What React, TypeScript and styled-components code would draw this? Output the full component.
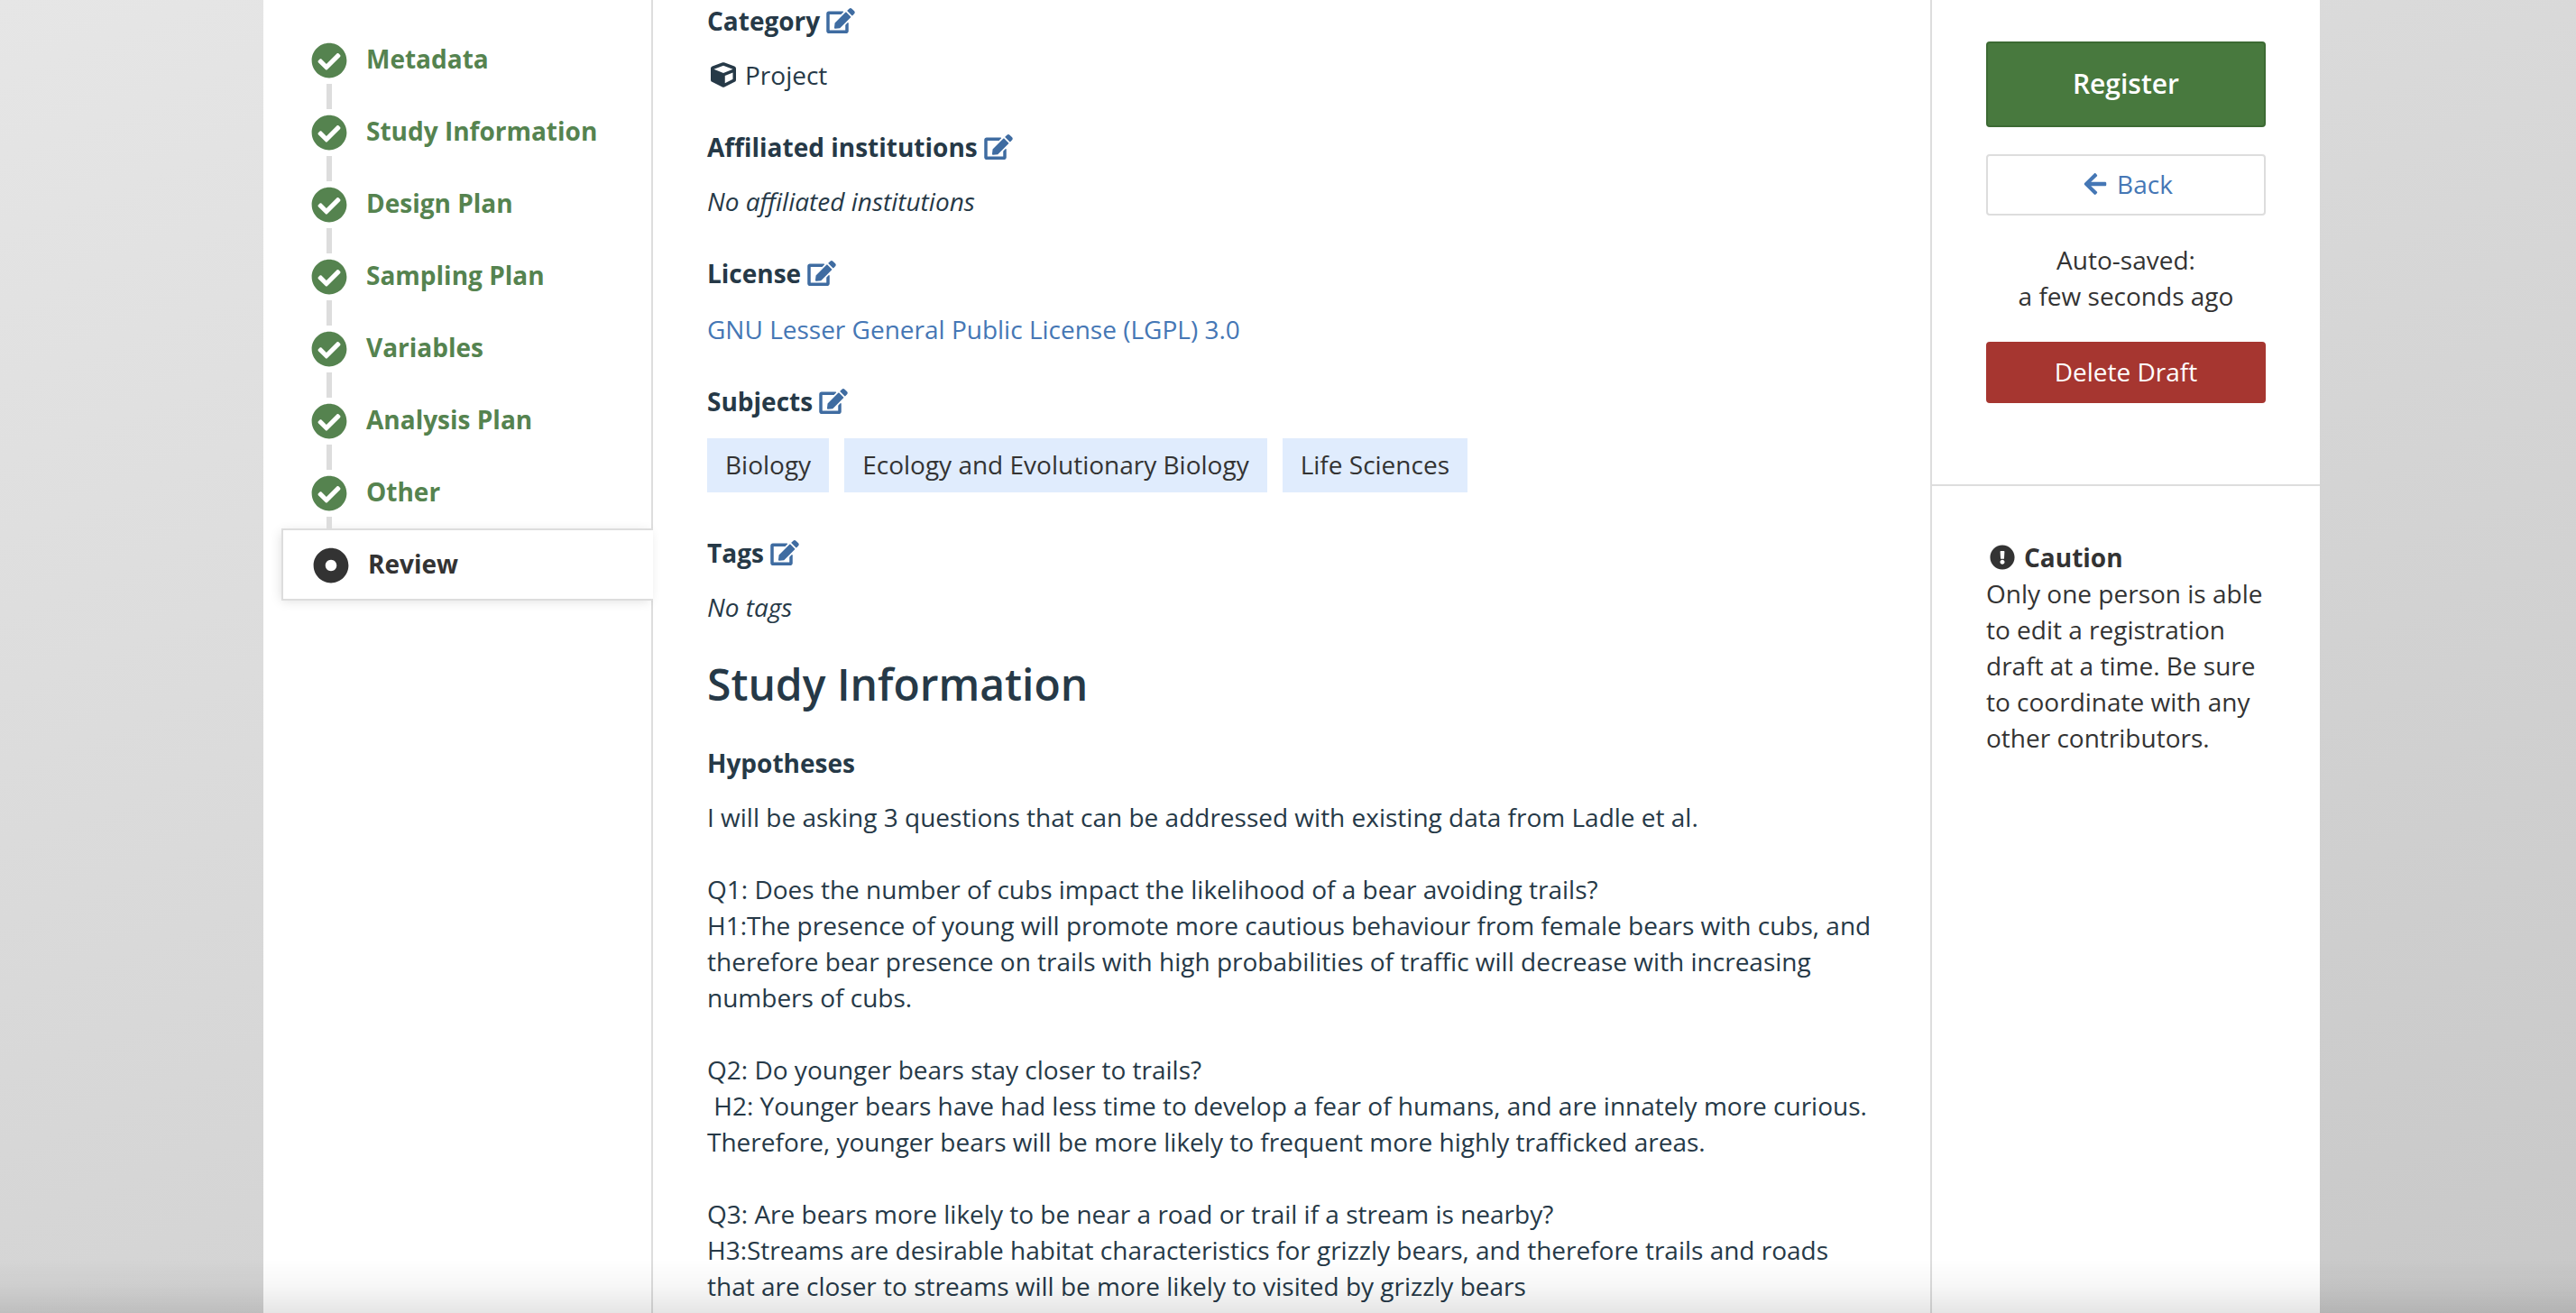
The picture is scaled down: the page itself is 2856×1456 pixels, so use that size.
import React from 'react';
import styled, { createGlobalStyle } from 'styled-components';
import { FaCheckCircle, FaDotCircle, FaCube, FaEdit, FaExclamationCircle, FaArrowLeft } from 'react-icons/fa';

const GlobalStyle = createGlobalStyle`
  *, *::before, *::after { box-sizing: border-box; }
  body {
    margin: 0;
    font-family: 'Open Sans', 'Noto Sans', sans-serif;
    font-size: 28px;
    line-height: 40px;
    color: #333333;
    background: #d8d8d8;
  }
`;

const Backdrop = styled.div`
  display: flex;
  min-height: 100vh;
  padding: 0 284px 0 292px;
  background: linear-gradient(159deg, #e6e6e6, #c8c8c8);
`;

const Page = styled.div`
  flex: 1;
  display: grid;
  grid-template-columns: 432px minmax(0, 1fr) 432px;
  background: #ffffff;
`;

const Sidebar = styled.nav`
  padding: 26px 0 0 20px;
  border-right: 2px solid #dddddd;
`;

const StepList = styled.ol`
  margin: 0 -2px 0 0;
  padding: 0;
  list-style: none;
`;

const Step = styled.li<{ $current: boolean }>`
  display: flex;
  height: 80px;
  border: ${p => (p.$current ? '2px solid #dddddd' : '0 solid transparent')};
  border-right: 0;
  padding-left: 33px;
  background: ${p => (p.$current ? '#ffffff' : 'none')};
  box-shadow: ${p => (p.$current ? '-2px 2px 12px -2px rgba(0, 0, 0, 0.14)' : 'none')};
`;

const Track = styled.span`
  display: flex;
  flex-direction: column;
  align-items: center;
  gap: 6px;
  width: 40px;
`;

const SegmentAbove = styled.span<{ $current: boolean; $shown: boolean }>`
  width: 6px;
  height: ${p => (p.$current ? '13px' : '15px')};
  background: ${p => (p.$shown ? '#dddddd' : 'transparent')};
`;

const SegmentBelow = styled.span<{ $shown: boolean }>`
  flex: 1;
  width: 6px;
  background: ${p => (p.$shown ? '#dddddd' : 'transparent')};
`;

const StepLink = styled.a<{ $current: boolean }>`
  display: flex;
  gap: 21px;
  color: ${p => (p.$current ? '#333333' : '#55834f')};
  font-weight: 700;
  text-decoration: none;
`;

const StepName = styled.span`
  align-self: center;
  padding-bottom: 2px;
`;

const Main = styled.main`
  padding: 3px 60px 0;
  color: #263947;
`;

const Field = styled.section`
  margin-bottom: 40px;
`;

const FieldTitle = styled.h3`
  display: flex;
  align-items: center;
  gap: 7px;
  margin: 0 0 20px;
  font-size: 28px;
  line-height: 40px;
  font-weight: 700;
`;

const EditButton = styled.button`
  display: flex;
  padding: 0;
  border: 0;
  background: none;
  color: #3f6ca1;
  svg { width: 32px; height: 28px; }
`;

const FixedIcon = styled.span`
  display: flex;
  justify-content: center;
  width: 35px;
  svg { width: 28px; height: 28px; }
`;

const Value = styled.p`
  display: flex;
  align-items: center;
  gap: 7px;
  margin: 0;
`;

const EmptyValue = styled.p`
  margin: 0;
  font-style: italic;
`;

const LicenseLink = styled.a`
  display: block;
  padding-top: 2px;
  color: #4577b5;
  text-decoration: none;
`;

const Chips = styled.ul`
  display: flex;
  gap: 17px;
  margin: 0;
  padding: 1px 0 7px;
  list-style: none;
`;

const Chip = styled.li`
  padding: 9px 20px 11px;
  color: #333333;
  background: #e0ecfd;
`;

const SectionTitle = styled.h2`
  margin: 0 0 41px;
  font-size: 48px;
  line-height: 52px;
  font-weight: 600;
`;

const Answer = styled.p`
  margin: 0;
  white-space: pre-wrap;
`;

const Aside = styled.aside`
  border-left: 2px solid #dddddd;
`;

const Actions = styled.div`
  display: flex;
  flex-direction: column;
  padding: 46px 60px 90px;
  border-bottom: 2px solid #dddddd;
`;

const Button = styled.button`
  display: flex;
  align-items: center;
  justify-content: center;
  height: 68px;
  padding: 0 0 2px;
  border: 2px solid;
  border-radius: 4px;
  font-family: inherit;
  font-size: 28px;
  line-height: 40px;
`;

const RegisterButton = styled(Button)`
  height: 95px;
  margin-bottom: 30px;
  border-color: #3c6a33;
  background: #48793e;
  color: #ffffff;
  font-size: 30px;
  font-weight: 600;
`;

const BackButton = styled(Button)`
  gap: 7px;
  border-color: #dddddd;
  background: #ffffff;
  color: #4577b5;
`;

const DeleteButton = styled(Button)`
  border-color: #a63630;
  background: #a63630;
  color: #ffffff;
`;

const SaveStatus = styled.p`
  margin: 29px 0 31px;
  text-align: center;
`;

const CautionBox = styled.div`
  padding: 59px 60px 0;
`;

const CautionTitle = styled.h3`
  display: flex;
  align-items: center;
  gap: 7px;
  margin: 0;
  font-size: 28px;
  line-height: 40px;
  font-weight: 700;
`;

const CautionText = styled.p`
  margin: 0;
`;

const BottomShade = styled.div`
  position: fixed;
  inset: auto 0 0 0;
  height: 60px;
  pointer-events: none;
  background: linear-gradient(to bottom, rgba(0, 0, 0, 0), rgba(0, 0, 0, 0.03) 50%, rgba(0, 0, 0, 0.1));
`;

const EditableTitle = ({ children }: { children: string }) => (
  <FieldTitle>
    {children}
    <EditButton type="button" aria-label={`Edit ${children}`}>
      <FaEdit aria-hidden />
    </EditButton>
  </FieldTitle>
);

const STEPS = [
  'Metadata',
  'Study Information',
  'Design Plan',
  'Sampling Plan',
  'Variables',
  'Analysis Plan',
  'Other',
  'Review',
];

const SUBJECTS = ['Biology', 'Ecology and Evolutionary Biology', 'Life Sciences'];

const HYPOTHESES = `I will be asking 3 questions that can be addressed with existing data from Ladle et al.

Q1: Does the number of cubs impact the likelihood of a bear avoiding trails?
H1:The presence of young will promote more cautious behaviour from female bears with cubs, and therefore bear presence on trails with high probabilities of traffic will decrease with increasing numbers of cubs.

Q2: Do younger bears stay closer to trails?
 H2: Younger bears have had less time to develop a fear of humans, and are innately more curious. Therefore, younger bears will be more likely to frequent more highly trafficked areas.

Q3: Are bears more likely to be near a road or trail if a stream is nearby?
H3:Streams are desirable habitat characteristics for grizzly bears, and therefore trails and roads that are closer to streams will be more likely to visited by grizzly bears`;

export default function App() {
  return (
    <>
      <GlobalStyle />
      <Backdrop>
        <Page>
          <Sidebar aria-label="Registration steps">
            <StepList>
              {STEPS.map((name, i) => {
                const current = name === 'Review';
                return (
                  <Step key={name} $current={current}>
                    <StepLink href="#" $current={current} aria-current={current ? 'step' : undefined}>
                      <Track>
                        <SegmentAbove $current={current} $shown={i > 0 && !current} />
                        {current ? <FaDotCircle size={40} aria-hidden /> : <FaCheckCircle size={40} aria-hidden />}
                        <SegmentBelow $shown={!current} />
                      </Track>
                      <StepName>{name}</StepName>
                    </StepLink>
                  </Step>
                );
              })}
            </StepList>
          </Sidebar>

          <Main>
            <Field>
              <EditableTitle>Category</EditableTitle>
              <Value>
                <FixedIcon>
                  <FaCube aria-hidden />
                </FixedIcon>
                Project
              </Value>
            </Field>
            <Field>
              <EditableTitle>Affiliated institutions</EditableTitle>
              <EmptyValue>No affiliated institutions</EmptyValue>
            </Field>
            <Field>
              <EditableTitle>License</EditableTitle>
              <LicenseLink href="#">GNU Lesser General Public License (LGPL) 3.0</LicenseLink>
            </Field>
            <Field>
              <EditableTitle>Subjects</EditableTitle>
              <Chips>
                {SUBJECTS.map(s => (
                  <Chip key={s}>{s}</Chip>
                ))}
              </Chips>
            </Field>
            <Field>
              <EditableTitle>Tags</EditableTitle>
              <EmptyValue>No tags</EmptyValue>
            </Field>
            <SectionTitle>Study Information</SectionTitle>
            <FieldTitle>Hypotheses</FieldTitle>
            <Answer>{HYPOTHESES}</Answer>
          </Main>

          <Aside>
            <Actions>
              <RegisterButton type="button">Register</RegisterButton>
              <BackButton type="button">
                <FixedIcon>
                  <FaArrowLeft aria-hidden />
                </FixedIcon>
                Back
              </BackButton>
              <SaveStatus>
                Auto-saved:
                <br />a few seconds ago
              </SaveStatus>
              <DeleteButton type="button">Delete Draft</DeleteButton>
            </Actions>
            <CautionBox>
              <CautionTitle>
                <FixedIcon>
                  <FaExclamationCircle aria-hidden />
                </FixedIcon>
                Caution
              </CautionTitle>
              <CautionText>
                Only one person is able to edit a registration draft at a time. Be sure to coordinate with any other
                contributors.
              </CautionText>
            </CautionBox>
          </Aside>
        </Page>
      </Backdrop>
      <BottomShade />
    </>
  );
}
